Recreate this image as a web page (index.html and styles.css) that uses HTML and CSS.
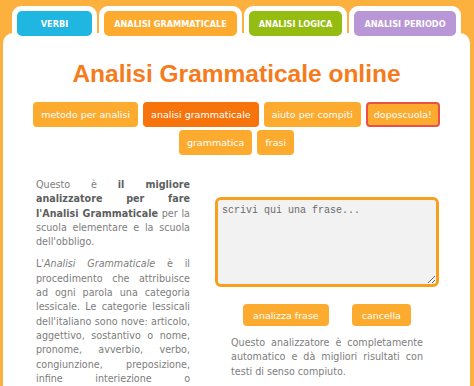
FILE: index.html
```html
<!DOCTYPE html>
<html lang="it">
<head>
<meta charset="utf-8">
<title>Analisi Grammaticale online</title>
<link rel="stylesheet" href="styles.css">
</head>
<body>
<div class="page">
  <div class="tabs">
    <div class="tab"><a class="tab-btn tab-verbi">VERBI</a></div>
    <div class="tab"><a class="tab-btn tab-gram">ANALISI GRAMMATICALE</a></div>
    <div class="tab"><a class="tab-btn tab-logica">ANALISI LOGICA</a></div>
    <div class="tab"><a class="tab-btn tab-periodo">ANALISI PERIODO</a></div>
  </div>
  <div class="panel">
    <h1 class="title">Analisi Grammaticale online</h1>
    <nav class="nav">
      <a class="nav-btn">metodo per analisi</a>
      <a class="nav-btn active">analisi grammaticale</a>
      <a class="nav-btn">aiuto per compiti</a>
      <a class="nav-btn outlined">doposcuola!</a>
      <a class="nav-btn">grammatica</a>
      <a class="nav-btn">frasi</a>
    </nav>
    <div class="content">
      <div class="col-text">
        <p>Questo è <b>il migliore analizzatore per fare l'Analisi Grammaticale</b> per la scuola elementare e la scuola dell'obbligo.</p>
        <p>L'<i>Analisi Grammaticale</i> è il procedimento che attribuisce ad ogni parola una categoria lessicale. Le categorie lessicali dell'italiano sono nove: articolo, aggettivo, sostantivo o nome, pronome, avverbio, verbo, congiunzione, preposizione, infine interiezione o esclamazione.</p>
      </div>
      <div class="col-form">
        <textarea class="input" placeholder="scrivi qui una frase..."></textarea>
        <div class="actions">
          <a class="act-btn">analizza frase</a>
          <a class="act-btn">cancella</a>
        </div>
        <p class="note">Questo analizzatore è completamente automatico e dà migliori risultati con testi di senso compiuto.</p>
      </div>
    </div>
  </div>
</div>
</body>
</html>
```
FILE: styles.css
```css
html, body {
  margin: 0;
  padding: 0;
}
body {
  background: #fcb13e;
  font-family: "DejaVu Sans", Verdana, sans-serif;
  overflow: hidden;
}
.page {
  width: 474px;
  height: 386px;
  overflow: hidden;
}
.tabs {
  position: relative;
  display: flex;
  gap: 2px;
  padding: 6px 0 0 12px;
  margin-bottom: -3px;
}
.tab {
  background: #fff;
  padding: 5px 5px 0;
  border-radius: 9px 9px 0 0;
}
.tab-btn {
  display: flex;
  align-items: center;
  justify-content: center;
  height: 25px;
  border-radius: 5px;
  color: #fff;
  font-weight: bold;
  font-size: 8.2px;
}
.tab-verbi { width: 75px; background: #20b6e2; }
.tab-gram { width: 133px; background: #fdab2f; }
.tab-logica { width: 93px; background: #95bc10; }
.tab-periodo { width: 102px; background: #b996d5; }

.panel {
  background: #fff;
  margin: 0 4px 0 3px;
  border-radius: 10px 10px 0 0;
  height: 400px;
}
.title {
  margin: 0;
  padding-top: 27px;
  text-align: center;
  font-family: "Liberation Sans", Arial, sans-serif;
  font-weight: bold;
  font-size: 24.5px;
  line-height: 28px;
  color: #f57b1c;
}
.nav {
  width: 410px;
  margin: 14px auto 0;
  display: flex;
  flex-wrap: wrap;
  justify-content: center;
  gap: 3px 5px;
}
.nav-btn {
  display: flex;
  align-items: center;
  height: 25px;
  box-sizing: border-box;
  padding: 0 8px;
  border-radius: 4px;
  background: #fdab2f;
  color: #fff;
  font-size: 9.5px;
}
.nav-btn.active {
  background: #f7740c;
}
.nav-btn.outlined {
  border: 2px solid #e9504a;
  padding: 0 6px;
}
.content {
  display: grid;
  grid-template-columns: 154px 224px;
  column-gap: 25px;
  padding-left: 33px;
  margin-top: 23px;
}
.col-text p, .note {
  margin: 0 0 8px;
  font-size: 9.6px;
  line-height: 14.3px;
  color: #7d7d7d;
  text-align: justify;
}
.col-text b {
  color: #5e5e5e;
}
.col-form {
  display: flex;
  flex-direction: column;
}
.input {
  margin-top: 19px;
  width: 224px;
  height: 90px;
  box-sizing: border-box;
  border: 3px solid #f5a01e;
  border-radius: 6px;
  background: #f2f2f2;
  padding: 5px 4px;
  font-family: "Liberation Mono", "Courier New", monospace;
  font-size: 10px;
  color: #555;
  outline: none;
}
.input::placeholder {
  color: #6a6a6a;
}
.actions {
  display: flex;
  justify-content: center;
  gap: 23px;
  margin-top: 17px;
}
.act-btn {
  display: flex;
  align-items: center;
  height: 22px;
  padding: 0 10px;
  border-radius: 4px;
  background: #fdab2f;
  color: #fff;
  font-size: 9.5px;
}
.note {
  margin: 10px 16px 0;
}
```
